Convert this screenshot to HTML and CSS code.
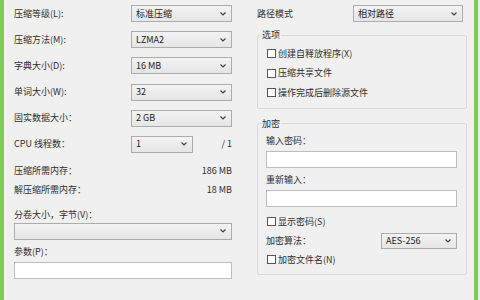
FILE: index.html
```html
<!DOCTYPE html>
<html lang="zh-CN">
<head>
    <meta charset="UTF-8">
    <title>添加到压缩包</title>
    <link rel="stylesheet" href="styles.css">
</head>
<body>
    <div class="window">
        <div class="edge"></div>
        <div class="main">
            <!-- left: compression settings -->
            <div class="left">
                <div class="grid">
                    <span class="label">压缩等级(L):</span>
                    <div class="select"><span>标准压缩</span><svg class="chev" width="6" height="4" viewBox="0 0 6 4"><path d="M0.5 0.5 L3 3 L5.5 0.5" fill="none" stroke="#444" stroke-width="1.2"/></svg></div>
                    <span class="label">压缩方法(M):</span>
                    <div class="select"><span>LZMA2</span><svg class="chev" width="6" height="4" viewBox="0 0 6 4"><path d="M0.5 0.5 L3 3 L5.5 0.5" fill="none" stroke="#444" stroke-width="1.2"/></svg></div>
                    <span class="label">字典大小(D):</span>
                    <div class="select"><span>16 MB</span><svg class="chev" width="6" height="4" viewBox="0 0 6 4"><path d="M0.5 0.5 L3 3 L5.5 0.5" fill="none" stroke="#444" stroke-width="1.2"/></svg></div>
                    <span class="label">单词大小(W):</span>
                    <div class="select"><span>32</span><svg class="chev" width="6" height="4" viewBox="0 0 6 4"><path d="M0.5 0.5 L3 3 L5.5 0.5" fill="none" stroke="#444" stroke-width="1.2"/></svg></div>
                    <span class="label">固实数据大小：</span>
                    <div class="select"><span>2 GB</span><svg class="chev" width="6" height="4" viewBox="0 0 6 4"><path d="M0.5 0.5 L3 3 L5.5 0.5" fill="none" stroke="#444" stroke-width="1.2"/></svg></div>
                    <span class="label">CPU 线程数：</span>
                    <div class="cpu">
                        <div class="select short"><span>1</span><svg class="chev" width="6" height="4" viewBox="0 0 6 4"><path d="M0.5 0.5 L3 3 L5.5 0.5" fill="none" stroke="#444" stroke-width="1.2"/></svg></div>
                        <span class="value">/ 1</span>
                    </div>
                </div>

                <div class="memory">
                    <div class="mem-row"><span class="label">压缩所需内存：</span><span class="value">186 MB</span></div>
                    <div class="mem-row"><span class="label">解压缩所需内存：</span><span class="value">18 MB</span></div>
                </div>

                <div class="label block volume-label">分卷大小，字节(V)：</div>
                <div class="select wide"><span></span><svg class="chev" width="6" height="4" viewBox="0 0 6 4"><path d="M0.5 0.5 L3 3 L5.5 0.5" fill="none" stroke="#444" stroke-width="1.2"/></svg></div>
                <div class="label block param-label">参数(P)：</div>
                <div class="input"></div>
            </div>

            <!-- right: path mode, options, encryption -->
            <div class="right">
                <div class="path-row">
                    <span class="label">路径模式</span>
                    <div class="select path"><span>相对路径</span><svg class="chev" width="6" height="4" viewBox="0 0 6 4"><path d="M0.5 0.5 L3 3 L5.5 0.5" fill="none" stroke="#444" stroke-width="1.2"/></svg></div>
                </div>

                <fieldset class="group options">
                    <legend>选项</legend>
                    <div class="check"><span class="box"></span>创建自释放程序(X)</div>
                    <div class="check"><span class="box"></span>压缩共享文件</div>
                    <div class="check"><span class="box"></span>操作完成后删除源文件</div>
                </fieldset>

                <fieldset class="group crypt">
                    <legend>加密</legend>
                    <div class="label block pw-label">输入密码：</div>
                    <div class="input"></div>
                    <div class="label block pw-label second">重新输入：</div>
                    <div class="input"></div>
                    <div class="check show"><span class="box"></span>显示密码(S)</div>
                    <div class="algo-row">
                        <span class="label">加密算法：</span>
                        <div class="select algo"><span>AES-256</span><svg class="chev" width="6" height="4" viewBox="0 0 6 4"><path d="M0.5 0.5 L3 3 L5.5 0.5" fill="none" stroke="#444" stroke-width="1.2"/></svg></div>
                    </div>
                    <div class="check names"><span class="box"></span>加密文件名(N)</div>
                </fieldset>
            </div>
        </div>
        <div class="edge edge-right"></div>
    </div>
</body>
</html>
```

FILE: styles.css
```css
body {
    margin: 0;
    background-color: #f0f0f0;
    font-family: "Noto Sans CJK SC", "Noto Sans", sans-serif;
    font-size: 9px;
    line-height: 12px;
    color: #2e2e2e;
}

.window {
    display: flex;
    width: 480px;
    height: 300px;
    overflow: hidden;
}

.edge {
    width: 4px;
    background-color: #7bcb55;
    flex-shrink: 0;
}

.edge-right {
    border-right: 2px solid #e4f3dc;
}

.main {
    flex: 1;
    display: flex;
}

.left {
    width: 218px;
    padding: 5px 0 0 10px;
}

.grid {
    display: grid;
    grid-template-columns: 117px 101px;
    row-gap: 9.2px;
    align-items: center;
}

.label {
    white-space: nowrap;
}

.block {
    display: block;
}

.select {
    height: 17px;
    box-sizing: border-box;
    border: 1px solid #acacac;
    background: linear-gradient(#f3f3f3, #e5e5e5);
    display: flex;
    align-items: center;
    justify-content: space-between;
    padding: 0 5px 0 4px;
    color: #222;
}

.chev {
    flex-shrink: 0;
}

.cpu {
    display: flex;
    align-items: center;
    justify-content: space-between;
}

.select.short {
    width: 62px;
}

.value {
    white-space: nowrap;
}

.memory {
    margin-top: 9px;
}

.mem-row {
    height: 19px;
    display: flex;
    align-items: center;
    justify-content: space-between;
}

.volume-label {
    margin-top: 9px;
}

.select.wide {
    margin-top: 2px;
}

.param-label {
    margin-top: 6px;
}

.input {
    height: 17px;
    box-sizing: border-box;
    border: 1px solid #bdbdbd;
    background-color: #ffffff;
    margin-top: 4px;
}

.right {
    width: 210px;
    margin-left: 25px;
    padding-top: 5px;
}

.path-row {
    display: flex;
    align-items: center;
    justify-content: space-between;
    padding-right: 4px;
}

.select.path {
    width: 110px;
}

.group {
    margin: 0;
    border: 1px solid #d9d9d9;
    border-radius: 2px;
    padding: 0 9px 0 8px;
    min-width: 0;
}

.group legend {
    padding: 0 1px;
    margin-left: -5px;
    line-height: 12px;
}

.options {
    margin-top: 7px;
    padding-top: 3px;
    padding-bottom: 5px;
}

.check {
    display: flex;
    align-items: center;
    height: 19.5px;
    white-space: nowrap;
}

.box {
    width: 9px;
    height: 9px;
    box-sizing: border-box;
    border: 1px solid #555;
    background-color: #fff;
    margin: 0 2px 0 1px;
}

.crypt {
    margin-top: 9px;
    padding-bottom: 6px;
}

.pw-label {
    margin-top: 5px;
}

.pw-label.second {
    margin-top: 6px;
}

.check.show {
    height: 16px;
    margin-top: 7px;
}

.algo-row {
    display: flex;
    align-items: center;
    justify-content: space-between;
    margin-top: 3px;
}

.select.algo {
    width: 76px;
    height: 16px;
}

.check.names {
    height: 16px;
    margin-top: 3px;
}
```
